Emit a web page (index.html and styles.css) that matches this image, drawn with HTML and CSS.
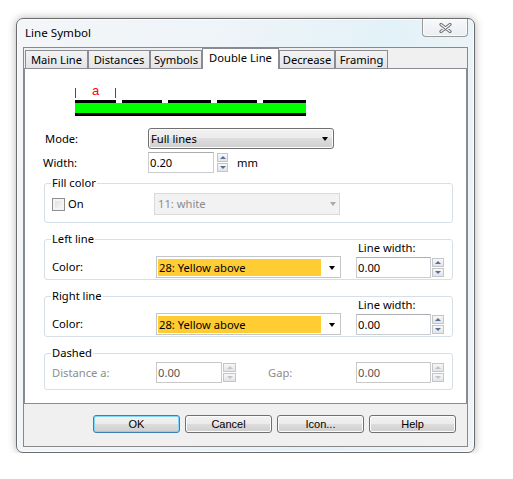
FILE: index.html
```html
<!DOCTYPE html>
<html lang="en">
<head>
    <meta charset="UTF-8">
    <title>Line Symbol</title>
    <link rel="stylesheet" href="styles.css">
</head>
<body>

    <div class="window">
        <div class="titlebar">
            <span class="title">Line Symbol</span>
            <div class="close-btn">
                <svg width="13" height="10" viewBox="0 0 13 10">
                    <path d="M2 1.5 L11 8.5 M11 1.5 L2 8.5" stroke="#6f6f6f" stroke-width="3.2" stroke-linecap="round"/>
                    <path d="M2 1.5 L11 8.5 M11 1.5 L2 8.5" stroke="#f6f6f6" stroke-width="1.2" stroke-linecap="round"/>
                </svg>
            </div>
        </div>

        <div class="client">
            <!-- tab strip -->
            <div class="tabs">
                <div class="tab" style="width: 63px">Main Line</div>
                <div class="tab" style="width: 62px">Distances</div>
                <div class="tab" style="width: 52px">Symbols</div>
                <div class="tab active" style="width: 77px">Double Line</div>
                <div class="tab" style="width: 56px">Decrease</div>
                <div class="tab" style="width: 53px">Framing</div>
            </div>

            <div class="tab-panel">
                <!-- line preview -->
                <svg class="preview" width="231" height="37" viewBox="0 0 231 37">
                    <rect x="0" y="8" width="1" height="10" fill="#f00"/>
                    <rect x="40" y="8" width="1" height="10" fill="#f00"/>
                    <text x="20.5" y="14.5" fill="#f00" font-family="Liberation Sans, sans-serif" font-size="13" text-anchor="middle">a</text>
                    <rect x="0" y="20" width="41" height="3" fill="#000"/>
                    <rect x="47" y="20" width="40" height="3" fill="#000"/>
                    <rect x="93" y="20" width="43" height="3" fill="#000"/>
                    <rect x="142" y="20" width="40" height="3" fill="#000"/>
                    <rect x="188" y="20" width="43" height="3" fill="#000"/>
                    <rect x="0" y="23" width="231" height="10" fill="#00ff00"/>
                    <rect x="0" y="33" width="231" height="3" fill="#000"/>
                </svg>

                <div class="form-row row-mode">
                    <span class="field-label">Mode:</span>
                    <div class="select-button">
                        <span class="select-text">Full lines</span>
                        <span class="arrow"></span>
                    </div>
                </div>

                <div class="form-row row-width">
                    <span class="field-label shift-left">Width:</span>
                    <div class="textbox textbox-width">0.20</div>
                    <div class="spin spin-width">
                        <span class="spin-btn"><span class="tri-up"></span></span>
                        <span class="spin-btn"><span class="tri-down"></span></span>
                    </div>
                    <span class="unit">mm</span>
                </div>

                <!-- Fill color -->
                <div class="group group-fill">
                    <div class="group-head">
                        <span class="group-title">Fill color</span>
                    </div>
                    <div class="group-row row-fill">
                        <span class="check-label">
                            <span class="checkbox"></span>On
                        </span>
                        <div class="combo disabled">
                            <span class="combo-text">11: white</span>
                            <span class="arrow"></span>
                        </div>
                    </div>
                </div>

                <!-- Left line -->
                <div class="group">
                    <div class="group-head">
                        <span class="group-title">Left line</span>
                        <span class="col-label">Line width:</span>
                    </div>
                    <div class="group-row">
                        <span class="row-label">Color:</span>
                        <div class="combo">
                            <span class="swatch">28: Yellow above</span>
                            <span class="arrow"></span>
                        </div>
                        <div class="textbox textbox-line">0.00</div>
                        <div class="spin">
                            <span class="spin-btn"><span class="tri-up"></span></span>
                            <span class="spin-btn"><span class="tri-down"></span></span>
                        </div>
                    </div>
                </div>

                <!-- Right line -->
                <div class="group">
                    <div class="group-head">
                        <span class="group-title">Right line</span>
                        <span class="col-label">Line width:</span>
                    </div>
                    <div class="group-row">
                        <span class="row-label">Color:</span>
                        <div class="combo">
                            <span class="swatch">28: Yellow above</span>
                            <span class="arrow"></span>
                        </div>
                        <div class="textbox textbox-line">0.00</div>
                        <div class="spin">
                            <span class="spin-btn"><span class="tri-up"></span></span>
                            <span class="spin-btn"><span class="tri-down"></span></span>
                        </div>
                    </div>
                </div>

                <!-- Dashed (disabled) -->
                <div class="group group-dashed">
                    <div class="group-head">
                        <span class="group-title">Dashed</span>
                    </div>
                    <div class="group-row row-dashed">
                        <span class="row-label muted">Distance a:</span>
                        <div class="textbox textbox-dist muted-input">0.00</div>
                        <div class="spin spin-dist disabled">
                            <span class="spin-btn"><span class="tri-up"></span></span>
                            <span class="spin-btn"><span class="tri-down"></span></span>
                        </div>
                        <span class="gap-label muted">Gap:</span>
                        <div class="textbox textbox-line muted-input">0.00</div>
                        <div class="spin disabled">
                            <span class="spin-btn"><span class="tri-up"></span></span>
                            <span class="spin-btn"><span class="tri-down"></span></span>
                        </div>
                    </div>
                </div>
            </div>

            <div class="buttons">
                <div class="button default">OK</div>
                <div class="button">Cancel</div>
                <div class="button">Icon...</div>
                <div class="button">Help</div>
            </div>
        </div>
    </div>

</body>
</html>
```

FILE: styles.css
```css
body {
    margin: 0;
    background-color: #fff;
    font-family: "Noto Sans", "Open Sans", sans-serif;
    font-size: 11.2px;
    line-height: 16px;
    color: #000;
}

/* window frame */
.window {
    margin: 18px 0 0 16px;
    width: 459px;
    height: 435px;
    box-sizing: border-box;
    border: 1px solid #6b6b6b;
    border-radius: 7px;
    padding: 0 6px 5px 6px;
    background: linear-gradient(100deg, #f4f6f8 0%, #eef4f8 40%, #e3f2f8 70%, #f1f4f7 100%);
    box-shadow: 0 0 8px rgba(0, 0, 0, 0.3), inset 0 0 0 1px rgba(255, 255, 255, 0.8);
    display: flex;
    flex-direction: column;
}

.titlebar {
    height: 28px;
    display: flex;
    justify-content: space-between;
    align-items: flex-start;
}

.title {
    margin: 6px 0 0 2px;
    font-size: 11.6px;
}

.close-btn {
    width: 46px;
    height: 18px;
    box-sizing: border-box;
    border: 1px solid #9a9a9a;
    border-top: none;
    border-radius: 0 0 4px 4px;
    background: linear-gradient(#f7f9fb, #e9eef2);
    box-shadow: inset 0 0 0 1px rgba(255, 255, 255, 0.7);
    display: flex;
    align-items: center;
    justify-content: center;
}

.close-btn svg {
    display: block;
}

.client {
    flex: 1;
    border: 1px solid #898989;
    background-color: #f0f0f0;
    display: flex;
    flex-direction: column;
}

/* tabs */
.tabs {
    display: flex;
    align-items: flex-end;
    height: 20px;
    padding-left: 1px;
}

.tab {
    height: 18px;
    box-sizing: border-box;
    border: 1px solid #898c95;
    border-bottom: none;
    background: linear-gradient(#f3f3f3, #e4e4e4);
    text-align: center;
    padding-top: 1px;
    line-height: 16px;
    white-space: nowrap;
}

.tab.active {
    height: 21px;
    margin-bottom: -1px;
    background: #fff;
    position: relative;
    z-index: 1;
}

.tab-panel {
    height: 336px;
    box-sizing: border-box;
    border: 1px solid #898c95;
    background-color: #fff;
}

.preview {
    display: block;
    margin: 11px 0 0 50px;
}

/* top form rows */
.form-row {
    display: flex;
    align-items: center;
    margin-left: 20px;
}

.row-mode {
    margin-top: 11px;
}

.row-width {
    margin-top: 3px;
}

.field-label {
    width: 103px;
}

.shift-left {
    margin-left: -2px;
    width: 105px;
}

.select-button {
    width: 186px;
    height: 21px;
    box-sizing: border-box;
    border: 1px solid #707070;
    border-radius: 3px;
    background: linear-gradient(#f2f2f2 0%, #ebebeb 50%, #dddddd 50%, #cfcfcf 100%);
    box-shadow: inset 0 0 0 1px #fbfbfb;
    display: flex;
    align-items: center;
    padding: 0 5px 0 2px;
}

.select-text {
    flex: 1;
}

.arrow {
    width: 0;
    height: 0;
    border-left: 3.5px solid transparent;
    border-right: 3.5px solid transparent;
    border-top: 4px solid #000;
}

.textbox {
    height: 21px;
    box-sizing: border-box;
    border: 1px solid #c9ccd1;
    border-top-color: #abadb3;
    background-color: #fff;
    padding-left: 1px;
    line-height: 19px;
}

.textbox-width {
    width: 66px;
}

.spin {
    display: flex;
    flex-direction: column;
    gap: 1px;
    width: 12px;
    margin-left: 1px;
}

.spin-width {
    width: 11px;
    margin-left: 3px;
}

.spin-btn {
    height: 9px;
    box-sizing: border-box;
    border: 1px solid #c2c5ca;
    background: linear-gradient(#f8f8f8, #e2e3e6);
    display: flex;
    align-items: center;
    justify-content: center;
}

.tri-up,
.tri-down {
    width: 0;
    height: 0;
    border-left: 3px solid transparent;
    border-right: 3px solid transparent;
}

.tri-up {
    border-bottom: 3px solid #56709e;
}

.tri-down {
    border-top: 3px solid #56709e;
}

.spin.disabled .tri-up {
    border-bottom-color: #c2c4c8;
}

.spin.disabled .tri-down {
    border-top-color: #c2c4c8;
}

.unit {
    margin-left: 9px;
}

/* group boxes */
.group {
    margin: 16px 0 0 19px;
    width: 409px;
    box-sizing: border-box;
    border: 1px solid #d5dfe5;
    border-radius: 3px;
    padding: 0 7px 1px 7px;
}

.group-fill {
    margin-top: 10px;
    padding-bottom: 7px;
}

.group-dashed {
    padding-bottom: 6px;
}

.group-head {
    display: flex;
    margin-top: -9px;
}

.group-title {
    align-self: flex-start;
    background-color: #fff;
    padding: 0 1px;
    margin-left: -1px;
}

.col-label {
    margin: 9px 0 0 auto;
    width: 87px;
    padding-left: 1px;
}

.group-row {
    display: flex;
    align-items: center;
}

.row-fill {
    margin-top: 2px;
}

.row-dashed {
    margin-top: 1px;
}

.row-label {
    width: 104px;
}

.check-label {
    width: 103px;
    display: flex;
    align-items: center;
}

.checkbox {
    width: 13px;
    height: 13px;
    box-sizing: border-box;
    border: 1px solid #8e8f8f;
    background: linear-gradient(135deg, #dcdcdc, #fbfbfb);
    box-shadow: inset 0 0 0 2px #f4f4f4;
    margin-right: 3px;
}

.combo {
    width: 185px;
    height: 22px;
    box-sizing: border-box;
    border: 1px solid #c3c5c9;
    background-color: #fff;
    padding: 2px 0 1px 1px;
    display: flex;
    align-items: center;
    margin-right: 15px;
}

.combo .arrow {
    margin-left: 8px;
}

.swatch {
    width: 163px;
    height: 17px;
    background-color: #ffcc33;
    padding-left: 1px;
    box-sizing: border-box;
    line-height: 17px;
}

.combo.disabled {
    margin-left: -1px;
    width: 186px;
    background-color: #f2f2f2;
    border-color: #d9d9d9;
    color: #8c8c8c;
    padding: 0 0 0 3px;
}

.combo-text {
    width: 164px;
}

.combo.disabled .arrow {
    margin-left: 8px;
    border-top-color: #a8a8a8;
}

.textbox-line {
    width: 75px;
}

.textbox-dist {
    width: 66px;
}

.spin-dist {
    width: 13px;
}

.gap-label {
    margin-left: 32px;
    width: 88px;
}

.muted {
    color: #8d8d8d;
}

.muted-input {
    color: #555;
    border-color: #c8c8c8;
}

/* dialog buttons */
.buttons {
    display: flex;
    justify-content: flex-end;
    gap: 5px;
    margin-top: 11px;
    padding-right: 11px;
}

.button {
    width: 87px;
    height: 18px;
    box-sizing: border-box;
    border: 1px solid #707070;
    border-radius: 3px;
    background: linear-gradient(#f2f2f2 0%, #ebebeb 50%, #dddddd 50%, #cfcfcf 100%);
    box-shadow: inset 0 0 0 1px #fcfcfc;
    font-family: "Liberation Sans", Arial, sans-serif;
    font-size: 11px;
    line-height: 16px;
    text-align: center;
}

.button.default {
    border-color: #3c7fb1;
    box-shadow: inset 0 0 0 1px #7fd6f7;
}
```
